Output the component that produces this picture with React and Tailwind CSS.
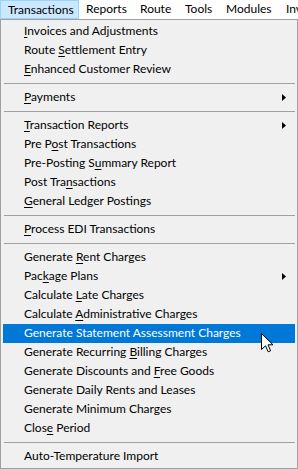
/**
 * TransactionsMenu — Windows-style menu bar with the Transactions dropdown open.
 */

const font = { fontFamily: 'Lato, "Liberation Sans", sans-serif' }

const menuBar = [
  { label: 'Transactions', w: 'w-[79px]', open: true },
  { label: 'Reports', w: 'w-[54px]' },
  { label: 'Route', w: 'w-[45px]' },
  { label: 'Tools', w: 'w-[41px]' },
  { label: 'Modules', w: 'w-[60px]' },
  { label: 'Inv', w: 'w-[19px]' },
]

// u = index of the access-key letter (-1 when none is shown)
const groups = [
  [
    { label: 'Invoices and Adjustments', u: 0 },
    { label: 'Route Settlement Entry', u: 6 },
    { label: 'Enhanced Customer Review', u: 0 },
  ],
  [{ label: 'Payments', u: 0, sub: true }],
  [
    { label: 'Transaction Reports', u: 0, sub: true },
    { label: 'Pre Post Transactions', u: 5 },
    { label: 'Pre-Posting Summary Report', u: 13 },
    { label: 'Post Transactions', u: 8 },
    { label: 'General Ledger Postings', u: 0 },
  ],
  [{ label: 'Process EDI Transactions', u: 0 }],
  [
    { label: 'Generate Rent Charges', u: 9 },
    { label: 'Package Plans', u: 3, sub: true },
    { label: 'Calculate Late Charges', u: 10 },
    { label: 'Calculate Administrative Charges', u: 10 },
    { label: 'Generate Statement Assessment Charges', u: -1, active: true },
    { label: 'Generate Recurring Billing Charges', u: 19 },
    { label: 'Generate Discounts and Free Goods', u: 23 },
    { label: 'Generate Daily Rents and Leases', u: -1 },
    { label: 'Generate Minimum Charges', u: -1 },
    { label: 'Close Period', u: 4 },
  ],
  [{ label: 'Auto-Temperature Import', u: -1 }],
]

function Label({ text, u }) {
  if (u < 0) return <span>{text}</span>
  return (
    <span>
      {text.slice(0, u)}
      <span className="underline decoration-1 underline-offset-[2px]">{text[u]}</span>
      {text.slice(u + 1)}
    </span>
  )
}

function Arrow() {
  return (
    <svg width="4" height="7" viewBox="0 0 4 7" className="mr-[9px] mt-[1px]">
      <polygon points="0,0 4,3.5 0,7" fill="#000" />
    </svg>
  )
}

function Cursor() {
  return (
    <svg
      width="13"
      height="20"
      viewBox="0 0 13 20"
      className="absolute left-[261px] top-[333px]"
    >
      <path
        d="M0.5 0.5 L0.5 16.5 L4.5 12.8 L7.2 18.8 L9.6 17.8 L7 11.8 L12 11.8 Z"
        fill="#fff"
        stroke="#000"
        strokeWidth="1"
        strokeLinejoin="miter"
      />
    </svg>
  )
}

function Item({ label, u, sub, active }) {
  const rowClass = active
    ? 'bg-[#0078d7] text-white'
    : 'text-black'
  return (
    <div className={`mx-[2px] h-[19px] flex items-center justify-between pl-[21px] pb-[1px] leading-[18px] ${rowClass}`}>
      <Label text={label} u={u} />
      {sub && <Arrow />}
    </div>
  )
}

export default function App() {
  return (
    <div className="relative w-[298px] h-[469px] bg-white overflow-hidden text-[12px]" style={font}>
      <div className="flex h-[19px] bg-white">
        {menuBar.map(m => (
          <div
            key={m.label}
            className={`${m.w} shrink-0 h-[19px] pl-[7px] leading-[18px] whitespace-nowrap ${
              m.open ? 'bg-[#cce8ff] border border-[#99d1ff] pl-[6px]' : ''
            }`}
          >
            {m.label}
          </div>
        ))}
      </div>

      <div className="h-[450px] bg-[#f0f0f0] border border-[#a0a0a0] py-[2px]">
        {groups.map((g, gi) => (
          <div key={gi}>
            {gi > 0 && (
              <div className="h-[9px] flex items-center ml-[3px] mr-[2px]">
                <div className="h-px w-full bg-[#a0a0a0]" />
              </div>
            )}
            {g.map(it => (
              <Item key={it.label} {...it} />
            ))}
          </div>
        ))}
      </div>

      <Cursor />
    </div>
  )
}
